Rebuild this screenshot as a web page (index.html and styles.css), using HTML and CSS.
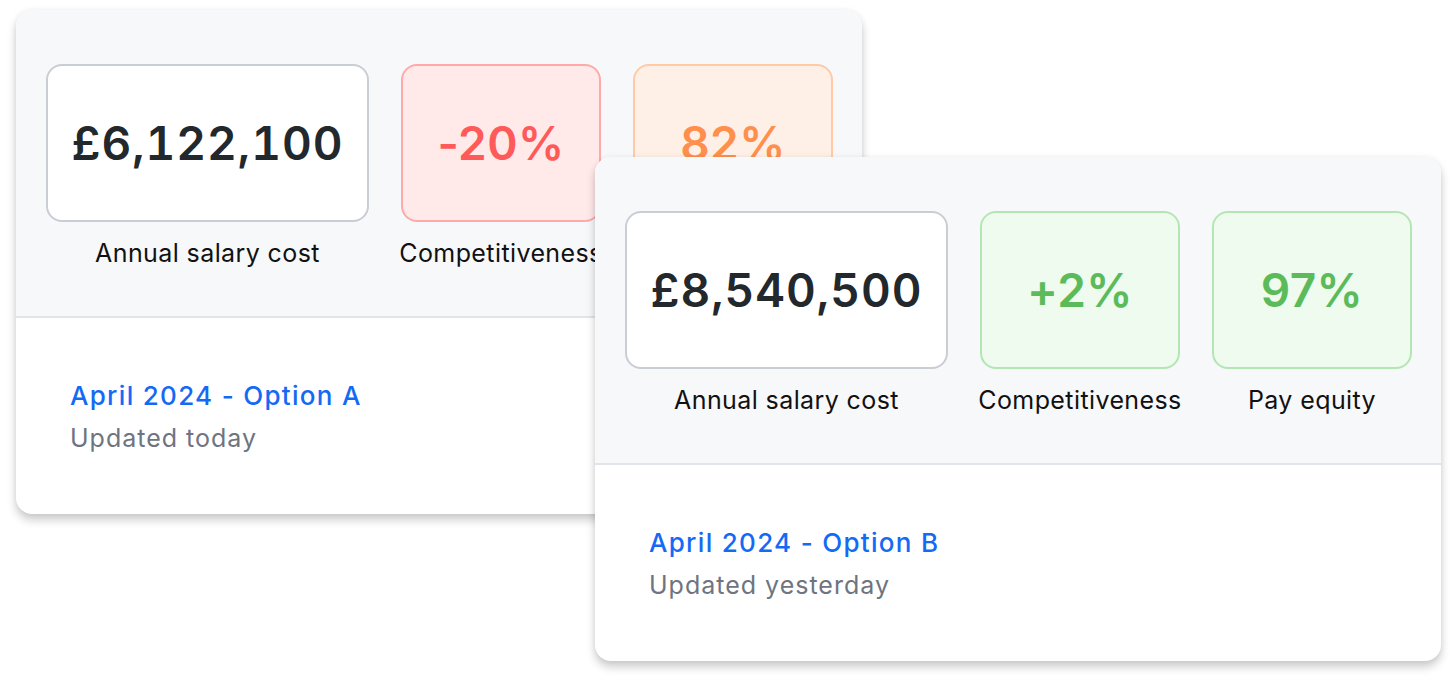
FILE: index.html
```html
<!DOCTYPE html>
<html lang="en">
<head>
    <meta charset="UTF-8" />
    <title>Salary scenarios</title>
    <link rel="stylesheet" href="styles.css">
</head>
<body>

    <!-- Option A -->
    <div class="card card-a">
        <div class="card-stats">
            <div class="stat">
                <div class="stat-box neutral">£6,122,100</div>
                <div class="stat-label">Annual salary cost</div>
            </div>
            <div class="stat">
                <div class="stat-box bad">-20%</div>
                <div class="stat-label">Competitiveness</div>
            </div>
            <div class="stat">
                <div class="stat-box warn">82%</div>
                <div class="stat-label">Pay equity</div>
            </div>
        </div>
        <div class="card-info">
            <div class="card-title">April 2024 - Option A</div>
            <div class="card-sub">Updated today</div>
        </div>
    </div>

    <!-- Option B, lies over option A -->
    <div class="card card-b">
        <div class="card-stats">
            <div class="stat">
                <div class="stat-box neutral">£8,540,500</div>
                <div class="stat-label">Annual salary cost</div>
            </div>
            <div class="stat">
                <div class="stat-box good">+2%</div>
                <div class="stat-label">Competitiveness</div>
            </div>
            <div class="stat">
                <div class="stat-box good">97%</div>
                <div class="stat-label">Pay equity</div>
            </div>
        </div>
        <div class="card-info">
            <div class="card-title">April 2024 - Option B</div>
            <div class="card-sub">Updated yesterday</div>
        </div>
    </div>

</body>
</html>
```

FILE: styles.css
```css
* {
    margin: 0;
    padding: 0;
    box-sizing: border-box;
}

body {
    font-family: Inter, 'Noto Sans', sans-serif;
    background-color: #ffffff;
    color: #1f2328;
    padding: 10px 0 0 16px;
    position: relative;
    min-height: 100vh;
}

.card {
    width: 846px;
    border-radius: 16px;
    overflow: hidden;
    background: #fff;
    box-shadow: 0 6px 10px rgba(0,0,0,0.2), 0 0 6px rgba(0,0,0,0.05);
}

.card-b {
    position: absolute;
    top: 157px;
    left: 595px;
}

.card-stats {
    display: grid;
    grid-template-columns: 323px 200px 200px;
    column-gap: 32px;
    height: 308px;
    padding: 54px 30px 0;
    background: #f7f8fa;
    border-bottom: 2px solid #e1e4e9;
}

.stat {
    display: flex;
    flex-direction: column;
    align-items: center;
}

.stat-box {
    width: 100%;
    height: 158px;
    border: 2px solid;
    border-radius: 16px;
    display: flex;
    align-items: center;
    justify-content: center;
    font-size: 46px;
    font-weight: 600;
    letter-spacing: 0.4px;
}

.stat-box.neutral {
    background: #fff;
    border-color: #c9cdd4;
    color: #23282c;
    font-variant-numeric: tabular-nums;
    letter-spacing: 1px;
}
.stat-box.bad { background: #ffe9e9; border-color: #ffaaaa; color: #ff5a5a; }
.stat-box.warn { background: #fff0e7; border-color: #ffcaa5; color: #ff8f4d; }
.stat-box.good { background: #eefbee; border-color: #b4e6b4; color: #5bbb5b; }

.stat-label {
    margin-top: 15px;
    font-size: 25px;
    line-height: 32px;
    letter-spacing: 0.4px;
    color: #111;
    white-space: nowrap;
}

.card-info {
    height: 196px;
    padding: 60px 54px 0;
}

.card-title {
    font-size: 26px;
    font-weight: 500;
    line-height: 36px;
    letter-spacing: 1.3px;
    color: #1469f5;
}

.card-sub {
    margin-top: 8px;
    font-size: 25px;
    line-height: 32px;
    letter-spacing: 1px;
    color: #6e7480;
}
```
